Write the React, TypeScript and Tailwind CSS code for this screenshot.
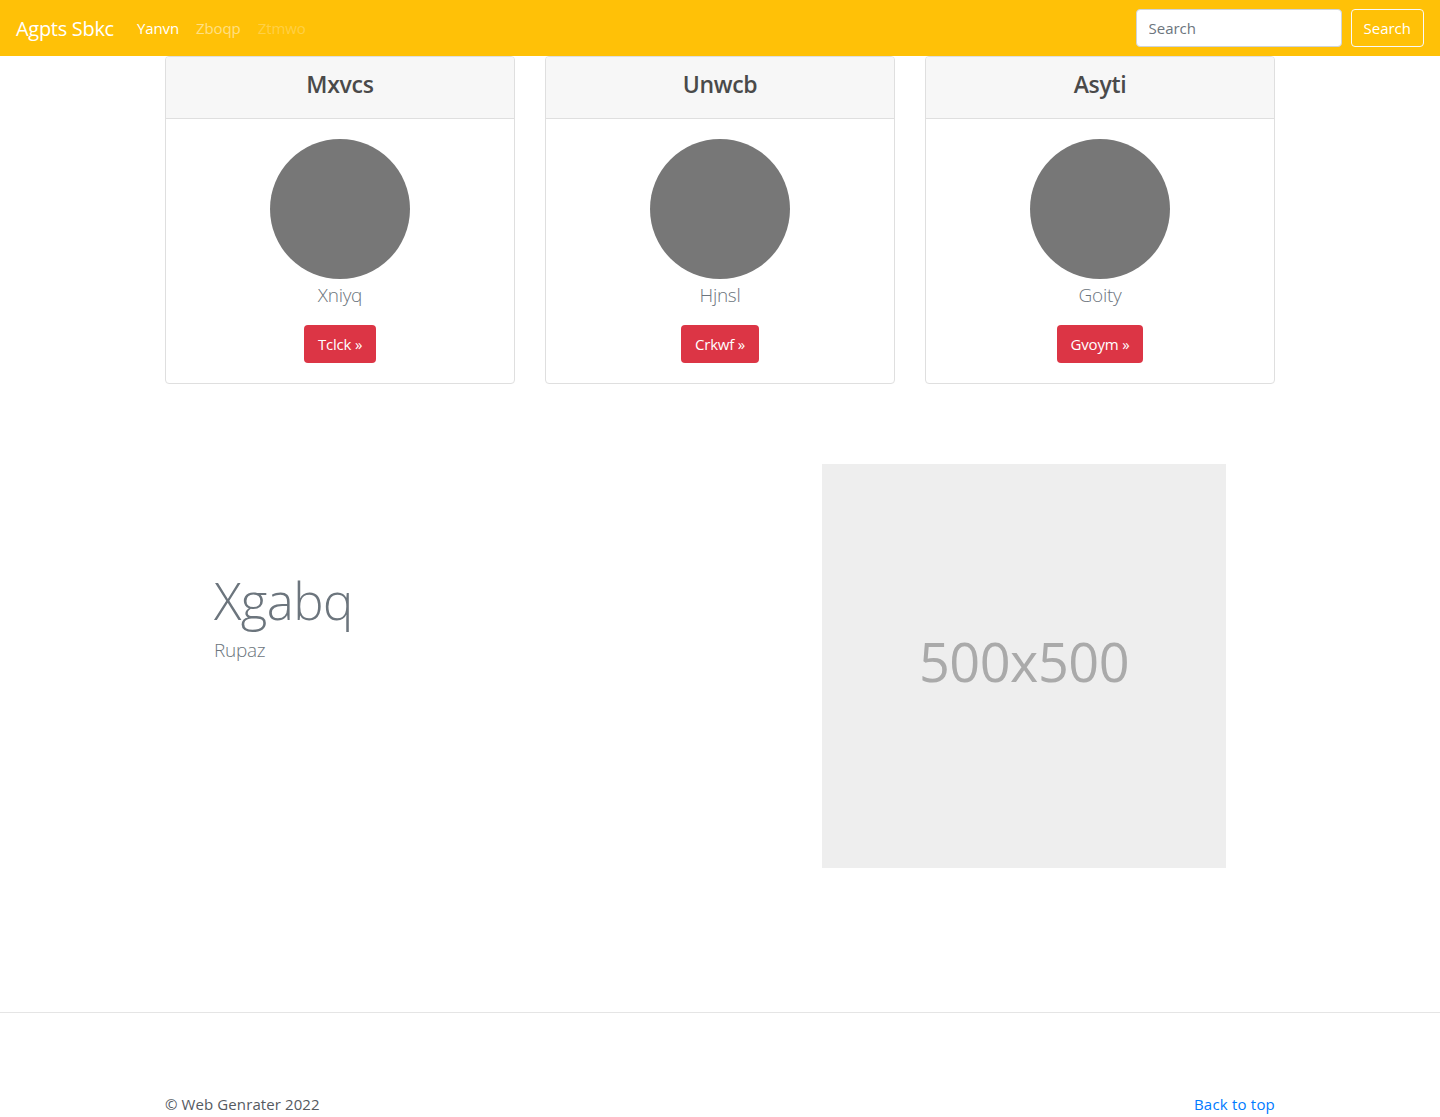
import React from 'react';

const cards = [
    { title: 'Mxvcs', name: 'Xniyq', cta: 'Tclck' },
    { title: 'Unwcb', name: 'Hjnsl', cta: 'Crkwf' },
    { title: 'Asyti', name: 'Goity', cta: 'Gvoym' },
];

export default function App() {
    return (
        <div className="min-h-screen bg-white text-[#212529] font-['Open_Sans',sans-serif]">
            {/* Navbar */}
            <nav className="h-14 bg-[#ffc107] flex items-center px-4">
                <a className="text-white text-[20px] mr-[23px] tracking-[-0.3px] -mt-[1px] pt-[2px]">Agpts Sbkc</a>
                <div className="flex items-center gap-[17px] text-[15px] tracking-[-0.1px]">
                    <a className="text-white">Yanvn</a>
                    <a className="text-white/50">Zboqp</a>
                    <a className="text-white/25">Ztmwo</a>
                </div>
                <div className="ml-auto flex items-center gap-[9px]">
                    <input
                        placeholder="Search"
                        className="w-[206px] h-[38px] rounded-[4px] bg-white border border-[#ced4da] px-3 text-[15px] placeholder:text-[#6c757d] outline-none"
                    />
                    <button className="h-[38px] px-3 rounded-[4px] border border-[#f8f9fa] text-white text-[15px]">
                        Search
                    </button>
                </div>
            </nav>

            {/* Cards */}
            <div className="w-[1110px] mx-auto grid grid-cols-3 gap-[30px]">
                {cards.map((c) => (
                    <div key={c.title} className="border border-[#dfdfdf] rounded-[4px] overflow-hidden">
                        <div className="h-[62px] bg-[#f7f7f7] border-b border-[#dfdfdf] flex items-center justify-center pb-[6px]">
                            <h4 className="text-[23px] font-semibold text-[#4a4a4a] tracking-[-0.3px]">{c.title}</h4>
                        </div>
                        <div className="flex flex-col items-center pt-5 pb-5">
                            <div className="w-[140px] h-[140px] rounded-full bg-[#777777]" />
                            <p className="mt-[1px] text-[19px] font-light text-[#6c757d] leading-[30px] tracking-[-0.3px]">{c.name}</p>
                            <button className="mt-[15px] h-[38px] px-[14px] rounded-[4px] bg-[#dc3545] text-white text-[15px] tracking-[-0.2px]">
                                {c.cta} »
                            </button>
                        </div>
                    </div>
                ))}
            </div>

            {/* Featurette */}
            <div className="w-[1110px] mx-auto flex items-start pt-[80px] pb-[144px]">
                <div className="flex-1 pl-[49px] pt-[103px]">
                    <h2 className="text-[51px] font-light text-[#6c757d] leading-[66px] tracking-[-0.6px]">Xgabq</h2>
                    <p className="mt-[6px] text-[19px] font-light text-[#6c757d] leading-[22px] tracking-[-0.3px]">Rupaz</p>
                </div>
                <div className="w-[404px] h-[404px] mr-[49px] bg-[#eeeeee] flex items-center justify-center pb-[10px]">
                    <span className="text-[54px] text-[#aaaaaa] tracking-[-0.5px]">500x500</span>
                </div>
            </div>

            {/* Footer */}
            <footer className="border-t border-[#e5e5e5]">
                <div className="w-[1110px] mx-auto flex justify-between pt-[80px] text-[15px]">
                    <p className="text-[#555a5f] tracking-[0.1px]">© Web Genrater 2022</p>
                    <a className="text-[#007bff] tracking-[0.2px]">Back to top</a>
                </div>
            </footer>
        </div>
    );
}
